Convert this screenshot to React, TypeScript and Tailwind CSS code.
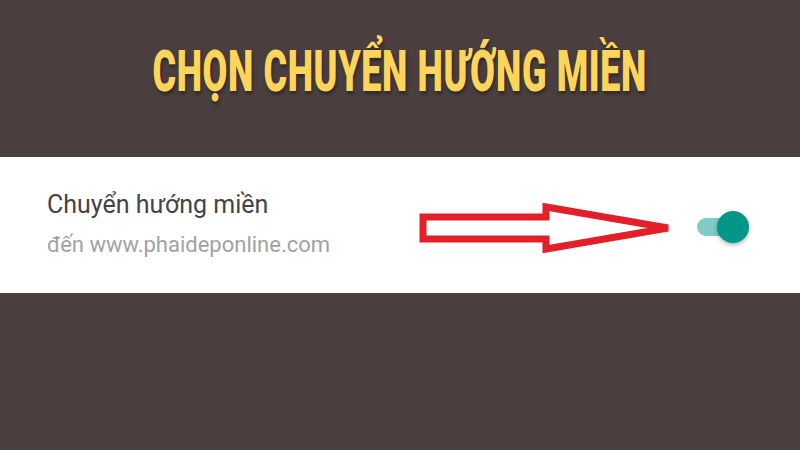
export default function App() {
  return (
    <div className="w-[800px] h-[450px] bg-[#4a3e3e] flex flex-col overflow-hidden">
      {/* heading */}
      <div className="h-[157px] flex justify-center pt-[42px]">
        <h1 className="inline-block scale-x-[0.62] whitespace-nowrap font-black uppercase text-[58px] leading-none tracking-[1px] text-[#fdd55b] [font-family:Roboto,'Noto_Sans',sans-serif] [text-shadow:2px_3px_4px_rgba(0,0,0,0.35)]">
          Chọn chuyển hướng miền
        </h1>
      </div>

      {/* settings row */}
      <div className="h-[136px] bg-white flex items-center pl-[47px] pr-[51px] [font-family:Roboto,'Noto_Sans',sans-serif]">
        <div className="flex-1 flex flex-col gap-[17px] pb-[2px]">
          <div className="text-[25px] leading-none text-[#444444]">Chuyển hướng miền</div>
          <div className="text-[22px] leading-none text-[#a2a2a2]">đến www.phaideponline.com</div>
        </div>

        <svg width="260" height="60" viewBox="423 198 260 60" className="mt-[6px] overflow-visible">
          <path
            d="M423 217 L546 217 L546 207 L668 228 L546 249 L546 239 L423 239 Z"
            fill="none"
            stroke="#e3202a"
            strokeWidth="7"
            strokeLinejoin="miter"
          />
        </svg>

        <div className="relative w-[52px] h-[32px] ml-[14px] mt-[4px] flex items-center">
          <div className="w-[46px] h-[18px] rounded-full bg-[#80cbc4]" />
          <div className="absolute right-0 top-0 w-[32px] h-[32px] rounded-full bg-[#009688] shadow-[0_2px_4px_rgba(0,0,0,0.3)]" />
        </div>
      </div>

      <div className="flex-1" />
    </div>
  );
}
